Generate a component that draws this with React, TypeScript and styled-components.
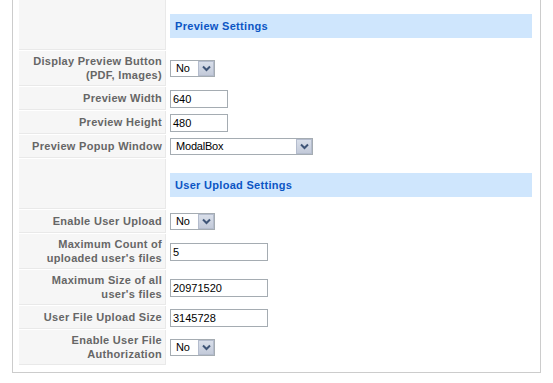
import React from "react";
import styled, { createGlobalStyle } from "styled-components";

const Global = createGlobalStyle`
  html, body { margin: 0; padding: 0; background: #fff; }
  body { font-family: "Liberation Sans", Arial, sans-serif; font-size: 11px; }
`;

const Fieldset = styled.div`
  box-sizing: border-box;
  margin-left: 12px;
  width: 529px;
  border: 1px solid #cccccc;
  border-top: none;
  padding: 0 6px 7px 6px;
`;

const Table = styled.div`
  display: flex;
  flex-direction: column;
  gap: 1px;
`;

const Row = styled.div<{ $h: number }>`
  display: grid;
  grid-template-columns: 147px 1fr;
  column-gap: 1px;
  height: ${(p) => p.$h}px;
`;

const Key = styled.div`
  box-sizing: border-box;
  background: #f6f6f6;
  border-bottom: 1px solid #e9e9e9;
  border-right: 1px solid #e9e9e9;
  color: #666666;
  font-weight: bold;
  font-size: 11px;
  letter-spacing: 0.3px;
  line-height: 14px;
  text-align: right;
  padding-right: 3px;
  display: flex;
  align-items: center;
  justify-content: flex-end;
`;

const Value = styled.div`
  display: flex;
  align-items: center;
  padding-left: 3px;
  padding-right: 2px;
`;

const HeaderValue = styled.div`
  padding: 14px 2px 0 3px;
`;

const SectionTitle = styled.div`
  height: 24px;
  background: #cfe6fd;
  color: #0b55c4;
  font-weight: bold;
  font-size: 11px;
  letter-spacing: 0.3px;
  display: flex;
  align-items: center;
  padding-left: 5px;
`;

const TextInput = styled.div<{ $w: number }>`
  box-sizing: border-box;
  width: ${(p) => p.$w}px;
  height: 18px;
  border: 1px solid #a5acb2;
  background: #fff;
  color: #000;
  font-size: 11px;
  line-height: 16px;
  padding-left: 2px;
`;

const SelectBox = styled.div<{ $w: number }>`
  box-sizing: border-box;
  width: ${(p) => p.$w}px;
  height: 17px;
  border: 1px solid #a5acb2;
  background: #fff;
  color: #000;
  font-size: 11px;
  letter-spacing: -0.2px;
  display: flex;
  align-items: center;
`;

const SelectText = styled.span`
  flex: 1;
  padding-left: 5px;
  line-height: 15px;
`;

const Arrow = styled.span`
  box-sizing: border-box;
  width: 16px;
  height: 15px;
  background: linear-gradient(#d9dfea, #c3cad9);
  border: 1px solid #b4bccd;
  display: flex;
  align-items: center;
  justify-content: center;
`;

const Select = ({ w, value }: { w: number; value: string }) => (
  <SelectBox $w={w}>
    <SelectText>{value}</SelectText>
    <Arrow>
      <svg width="9" height="7" viewBox="0 0 9 7">
        <path d="M1 1.5 L4.5 5 L8 1.5" fill="none" stroke="#3f5577" strokeWidth="2" />
      </svg>
    </Arrow>
  </SelectBox>
);

type Item =
  | { kind: "header"; title: string }
  | { kind: "select"; label: string[]; value: string; w: number }
  | { kind: "input"; label: string[]; value: string; w: number };

const items: Item[] = [
  { kind: "header", title: "Preview Settings" },
  { kind: "select", label: ["Display Preview Button", "(PDF, Images)"], value: "No", w: 45 },
  { kind: "input", label: ["Preview Width"], value: "640", w: 58 },
  { kind: "input", label: ["Preview Height"], value: "480", w: 58 },
  { kind: "select", label: ["Preview Popup Window"], value: "ModalBox", w: 143 },
  { kind: "header", title: "User Upload Settings" },
  { kind: "select", label: ["Enable User Upload"], value: "No", w: 45 },
  { kind: "input", label: ["Maximum Count of", "uploaded user's files"], value: "5", w: 98 },
  { kind: "input", label: ["Maximum Size of all", "user's files"], value: "20971520", w: 98 },
  { kind: "input", label: ["User File Upload Size"], value: "3145728", w: 98 },
  { kind: "select", label: ["Enable User File", "Authorization"], value: "No", w: 45 },
];

export default function App() {
  return (
    <>
      <Global />
      <Fieldset>
        <Table>
          {items.map((it, i) => {
            if (it.kind === "header") {
              return (
                <Row key={i} $h={50}>
                  <Key />
                  <HeaderValue>
                    <SectionTitle>{it.title}</SectionTitle>
                  </HeaderValue>
                </Row>
              );
            }
            const h = it.label.length > 1 ? 35 : 23;
            return (
              <Row key={i} $h={h}>
                <Key>
                  <span>
                    {it.label.map((l, j) => (
                      <React.Fragment key={j}>
                        {j > 0 && <br />}
                        {l}
                      </React.Fragment>
                    ))}
                  </span>
                </Key>
                <Value>
                  {it.kind === "select" ? (
                    <Select w={it.w} value={it.value} />
                  ) : (
                    <TextInput $w={it.w}>{it.value}</TextInput>
                  )}
                </Value>
              </Row>
            );
          })}
        </Table>
      </Fieldset>
    </>
  );
}
